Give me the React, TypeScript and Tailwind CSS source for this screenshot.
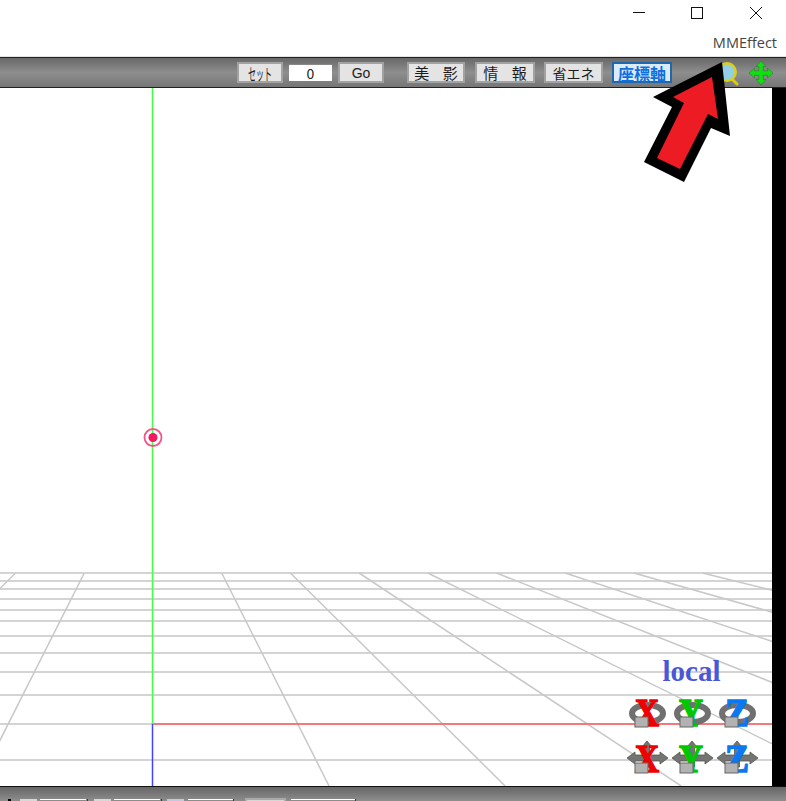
const horizontals = [573, 581, 589, 599, 610, 621, 636, 653, 672, 695, 724, 760];
const slants = [-3, -2, -1, 1, 2, 3, 4, 5, 6, 7, 8, 9];

const ToolButton = ({ children, className = "" }: { children: React.ReactNode; className?: string }) => (
  <button
    className={`h-[21px] flex items-center justify-center bg-[#e4e4e4] border-2 border-[#a2a2a2] text-[14px] leading-none text-[#1c1c1c] ${className}`}
  >
    {children}
  </button>
);

const Gizmo = ({ letter, color, rotate, dx = 0 }: { letter: string; color: string; rotate?: boolean; dx?: number }) => (
  <svg className="overflow-visible" width="45" height="46" viewBox="0 0 45 46">
    {rotate ? (
      <ellipse cx="22.5" cy="19.5" rx="15.5" ry="8.5" fill="none" stroke="#707070" strokeWidth="6" />
    ) : (
      <g fill="#747474" stroke="#55554a" strokeWidth="0.8">
        <path d="M2 18 10 12v3h25v-3l8 6-8 6v-3H10v3z" />
        <path d="M22 1 27 7h-2.5v20h-5V7H17z" />
      </g>
    )}
    <text
      x={22 + dx}
      y="32"
      textAnchor="middle"
      fontFamily="'Liberation Serif', serif"
      fontWeight="700"
      fontSize="41"
      fill={color}
      stroke={color}
      strokeWidth="1.6"
      textLength="24"
      lengthAdjust="spacingAndGlyphs"
    >
      {letter}
    </text>
    <rect x="10" y="23" width="13" height="10" fill="#b2b2b2" stroke="#666" strokeWidth="1" />
  </svg>
);

const App = () => {
  return (
    <div className="relative w-[786px] h-[801px] flex flex-col overflow-hidden bg-white font-['Noto_Sans_CJK_JP','Noto_Sans',sans-serif]">
      {/* title bar */}
      <div className="h-[57px] flex flex-col items-end border-b border-[#e4e4e4]">
        <div className="flex pr-px h-[25px]">
          <div className="w-[58px] flex items-center justify-center">
            <svg width="14" height="14" viewBox="0 0 14 14">
              <path d="M1 6.5h12" stroke="#111" strokeWidth="1" />
            </svg>
          </div>
          <div className="w-[58px] flex items-center justify-center">
            <svg width="14" height="14" viewBox="0 0 14 14">
              <rect x="1.5" y="1.5" width="11" height="11" fill="none" stroke="#111" strokeWidth="1" />
            </svg>
          </div>
          <div className="w-[59px] flex items-center justify-center">
            <svg width="14" height="14" viewBox="0 0 14 14">
              <path d="M1 1l12 12M13 1 1 13" stroke="#111" strokeWidth="1" />
            </svg>
          </div>
        </div>
        <div className="mt-[10px] pr-[9px] text-[14.5px] leading-[16px] text-[#444] font-['Open_Sans',sans-serif]">
          MMEffect
        </div>
      </div>

      {/* toolbar */}
      <div className="h-[31px] flex items-center pl-[237px] border-y border-[#222] bg-gradient-to-b from-[#686868] via-[#8e8e8e] to-[#767676]">
        <ToolButton className="w-[46px]">
          <span className="inline-block scale-x-[0.5] text-[16px] whitespace-nowrap">セット</span>
        </ToolButton>
        <div className="ml-[6px] w-[43px] h-[17px] bg-white border-t border-[#888] text-[14px] leading-[16px] text-center text-[#222]">
          0
        </div>
        <ToolButton className="ml-[6px] w-[46px] font-['Liberation_Sans',sans-serif]">Go</ToolButton>
        <ToolButton className="ml-[23px] w-[58px] pl-[5px] text-[15px] tracking-[5px]">美 影</ToolButton>
        <ToolButton className="ml-[10px] w-[60px] pl-[5px] text-[15px] tracking-[5px]">情 報</ToolButton>
        <ToolButton className="ml-[9px] w-[59px]">省エネ</ToolButton>
        <button className="ml-[9px] w-[60px] h-[21px] flex items-center justify-center bg-[#dcebfa] border-2 border-[#1f68ad] text-[16px] leading-none font-bold text-[#0f6fdc]">
          座標軸
        </button>
        {/* magnifier */}
        <svg className="ml-[44px]" width="24" height="26" viewBox="0 0 24 26">
          <path d="M16 19l5 5" stroke="#d8cc10" strokeWidth="3" strokeLinecap="round" />
          <circle cx="11" cy="12" r="8.7" fill="#93cfe6" stroke="#dccf18" strokeWidth="2.5" />
        </svg>
        {/* move cross */}
        <svg className="ml-[9px]" width="24" height="24" viewBox="0 0 24 24">
          <path
            d="M12 0 17 5.5H14.2V9.8H18.5V7L24 12 18.5 17V14.2H14.2V18.5H17L12 24 7 18.5H9.8V14.2H5.5V17L0 12 5.5 7V9.8H9.8V5.5H7Z"
            fill="#10e010"
            stroke="#2d6a2d"
            strokeWidth="0.5"
          />
        </svg>
      </div>

      {/* 3d view */}
      <div className="flex h-[698px]">
        <div className="relative w-[772px] bg-white">
          <svg className="block w-full h-full" viewBox="0 88 772 698">
            {horizontals.map((y) => (
              <line key={y} x1="0" x2="772" y1={y} y2={y} stroke="#d4d4d4" strokeWidth="1.8" />
            ))}
            {slants.map((k) => (
              <line
                key={k}
                x1={153 + 68.7 * k}
                y1="573"
                x2={153 + 68.7 * k + 0.504 * k * 213}
                y2="786"
                stroke="#c8c8c8"
                strokeWidth="1.5"
              />
            ))}
            <line x1="152.5" x2="152.5" y1="88" y2="724" stroke="#44ff44" strokeWidth="1.5" />
            <line x1="152.5" x2="152.5" y1="724" y2="786" stroke="#4444ff" strokeWidth="1.5" />
            <line x1="153" x2="772" y1="724" y2="724" stroke="#ff5c5c" strokeWidth="1.5" />
            <circle cx="153" cy="437.5" r="8.5" fill="none" stroke="#f2558a" strokeWidth="1.8" />
            <circle cx="153" cy="437.5" r="4.5" fill="#f5175f" />
          </svg>
          {/* axis gizmos */}
          <div className="absolute right-[12px] top-[568px] flex flex-col items-center">
            <div className="text-[29px] leading-[30px] font-bold text-[#4a57d6] font-['Liberation_Serif',serif] pr-[2px]">
              local
            </div>
            <div className="grid grid-cols-3 mt-[8px]">
              <Gizmo letter="X" color="#f00000" rotate />
              <Gizmo letter="Y" color="#00c800" rotate dx={-1} />
              <Gizmo letter="Z" color="#0a78f0" rotate />
            </div>
            <div className="grid grid-cols-3">
              <Gizmo letter="X" color="#f00000" />
              <Gizmo letter="Y" color="#00c800" dx={-1} />
              <Gizmo letter="Z" color="#0a78f0" />
            </div>
          </div>
        </div>
        <div className="flex-1 bg-black" />
      </div>

      {/* bottom strip, cut off by the window edge */}
      <div className="h-[15px] overflow-hidden border-t border-[#111] bg-gradient-to-b from-[#666666] to-[#8e8e8e] pt-[12px] flex items-start">
        <div className="ml-[8px] w-[3px] h-[3px] bg-black" />
        <div className="ml-[9px] w-[17px] h-[6px] bg-[#d8d8d8]" />
        <div className="ml-[3px] w-[46px] h-[1px] bg-white" />
        <div className="ml-px w-px h-[6px] bg-[#333]" />
        <div className="ml-[6px] w-[17px] h-[6px] bg-[#d8d8d8]" />
        <div className="ml-[3px] w-[46px] h-[1px] bg-white" />
        <div className="ml-px w-px h-[6px] bg-[#333]" />
        <div className="ml-[5px] w-[17px] h-[6px] bg-[#c4c8e0]" />
        <div className="ml-[4px] w-[45px] h-[1px] bg-white" />
        <div className="w-px h-[6px] bg-[#333]" />
        <div className="ml-[11px] -mt-px w-[41px] h-[6px] bg-[#d8d8d8] border-2 border-[#aaa]" />
        <div className="ml-[5px] w-[64px] h-[1px] bg-white" />
        <div className="w-px h-[6px] bg-[#333]" />
      </div>

      {/* callout arrow over the toolbar */}
      <svg className="absolute left-0 top-0 pointer-events-none" width="786" height="200" viewBox="0 0 786 200">
        <polygon points="722,62 653,97 672,107 644,162 684,182 711,128 730,136" fill="#000" />
        <polygon points="712,77 673,97 684,103 657,158 680,169 708,114 718,119" fill="#ed1c24" />
      </svg>
    </div>
  );
};

export default App;
